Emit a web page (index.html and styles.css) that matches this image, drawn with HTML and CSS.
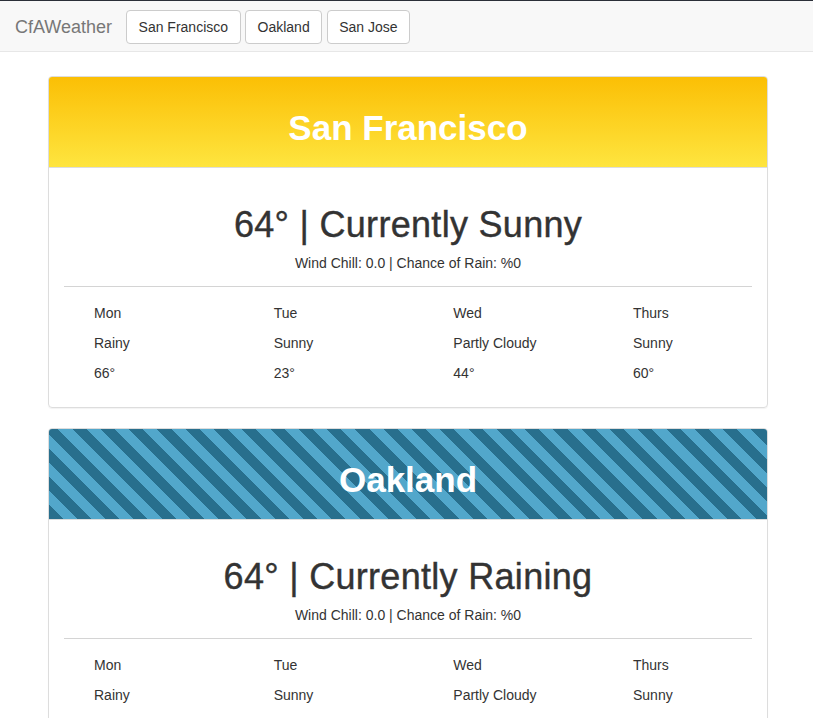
FILE: index.html
```html
<!DOCTYPE html>
<html>
<head>
<meta charset="utf-8">
<title>CfAWeather</title>
<link rel="stylesheet" href="styles.css">
</head>
<body>
<nav class="navbar">
  <span class="brand">CfAWeather</span>
  <div class="nav-buttons">
    <button class="btn">San Francisco</button>
    <button class="btn">Oakland</button>
    <button class="btn">San Jose</button>
  </div>
</nav>
<main class="container">
  <section class="panel">
    <header class="panel-heading sunny"><h1 class="city">San Francisco</h1></header>
    <div class="panel-body">
      <h1 class="current">64° | Currently Sunny</h1>
      <p class="sub">Wind Chill: 0.0 | Chance of Rain: %0</p>
      <hr class="divider">
      <div class="forecast">
        <div class="day"><p>Mon</p><p>Rainy</p><p>66°</p></div>
        <div class="day"><p>Tue</p><p>Sunny</p><p>23°</p></div>
        <div class="day"><p>Wed</p><p>Partly Cloudy</p><p>44°</p></div>
        <div class="day"><p>Thurs</p><p>Sunny</p><p>60°</p></div>
      </div>
    </div>
  </section>
  <section class="panel">
    <header class="panel-heading rainy"><h1 class="city">Oakland</h1></header>
    <div class="panel-body">
      <h1 class="current">64° | Currently Raining</h1>
      <p class="sub">Wind Chill: 0.0 | Chance of Rain: %0</p>
      <hr class="divider">
      <div class="forecast">
        <div class="day"><p>Mon</p><p>Rainy</p><p>66°</p></div>
        <div class="day"><p>Tue</p><p>Sunny</p><p>23°</p></div>
        <div class="day"><p>Wed</p><p>Partly Cloudy</p><p>44°</p></div>
        <div class="day"><p>Thurs</p><p>Sunny</p><p>60°</p></div>
      </div>
    </div>
  </section>
</main>
</body>
</html>
```
FILE: styles.css
```css
* { box-sizing: border-box; }
html, body { margin: 0; padding: 0; background: #fff; }
body {
  font-family: "Liberation Sans", Arial, sans-serif;
  font-size: 14px;
  line-height: 20px;
  color: #333;
}
.navbar {
  display: flex;
  align-items: center;
  gap: 14px;
  height: 52px;
  padding: 8px 15px 7px;
  background: #f8f8f8;
  border-top: 1px solid #2b2f38;
  border-bottom: 1px solid #e7e7e7;
}
.brand {
  font-size: 18px;
  color: #777;
  line-height: 20px;
}
.nav-buttons { display: flex; gap: 4.5px; }
.btn {
  font-family: inherit;
  font-size: 14px;
  line-height: 20px;
  height: 34px;
  padding: 6px 11.5px;
  color: #333;
  background: #fff;
  border: 1px solid #ccc;
  border-radius: 4px;
}
.container {
  width: 720px;
  margin: 24px 0 0 48px;
}
.panel {
  border: 1px solid #ddd;
  border-radius: 4px;
  margin-bottom: 20px;
  box-shadow: 0 1px 1px rgba(0,0,0,.05);
  overflow: hidden;
}
.panel-heading {
  padding: 10px 15px;
  border-bottom: 1px solid #ddd;
  height: 91px;
}
.sunny { background: linear-gradient(to bottom, #fbbf05, #fee53f); }
.rainy {
  background: repeating-linear-gradient(45deg, #286f8d 0 10px, #52a7cb 10px 20px);
}
.city {
  margin: 21px 0 10px;
  font-size: 35px;
  line-height: 39.6px;
  font-weight: bold;
  color: #fff;
  text-align: center;
}
.panel-body { padding: 15px; }
.current {
  margin: 22px 0 8px;
  font-size: 36px;
  line-height: 40px;
  font-weight: normal;
  letter-spacing: 0.3px;
  text-align: center;
  -webkit-text-stroke: 0.4px #333;
}
.sub { margin: 0; text-align: center; }
.divider {
  margin: 13px 0 16px;
  border: 0;
  border-top: 1px solid #d4d4d4;
}
.forecast {
  display: grid;
  grid-template-columns: repeat(4, 179.67px);
  padding-left: 30px;
}
.day p { margin: 0 0 10px; }
.day p:last-child { margin-bottom: 9px; }
```
